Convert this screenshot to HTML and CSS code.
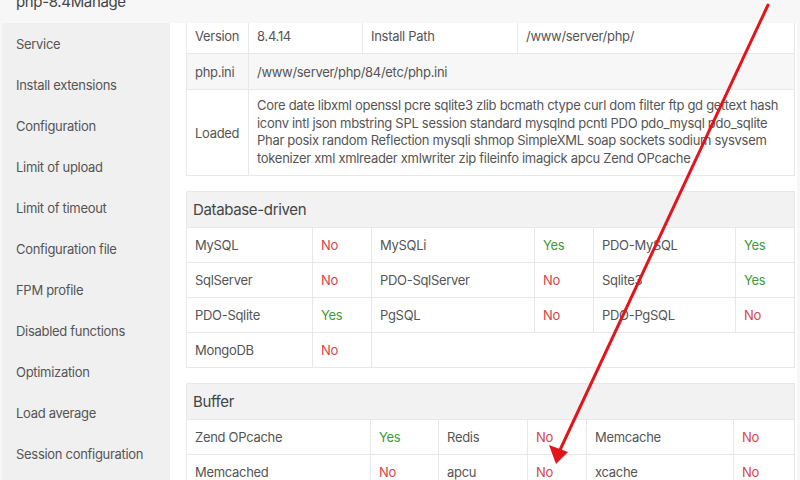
FILE: index.html
```html
<!DOCTYPE html>
<html>
<head>
<meta charset="utf-8">
<link rel="stylesheet" href="styles.css">
</head>
<body>
<div class="app">
  <header class="titlebar"><div class="title">php-8.4Manage</div></header>
  <div class="main">
    <nav class="sidebar">
      <div class="nav-item">Service</div>
      <div class="nav-item">Install extensions</div>
      <div class="nav-item">Configuration</div>
      <div class="nav-item">Limit of upload</div>
      <div class="nav-item">Limit of timeout</div>
      <div class="nav-item">Configuration file</div>
      <div class="nav-item">FPM profile</div>
      <div class="nav-item">Disabled functions</div>
      <div class="nav-item">Optimization</div>
      <div class="nav-item">Load average</div>
      <div class="nav-item">Session configuration</div>
    </nav>
    <section class="content">
      <table class="grid info">
        <colgroup><col class="c62"><col class="c114"><col class="c155"><col class="c277"></colgroup>
        <tr class="r-top">
          <td>Version</td><td>8.4.14</td><td>Install Path</td><td>/www/server/php/</td>
        </tr>
        <tr class="r-gray">
          <td>php.ini</td><td colspan="3">/www/server/php/84/etc/php.ini</td>
        </tr>
        <tr class="r-loaded">
          <td>Loaded</td>
          <td colspan="3" class="loaded">Core date libxml openssl pcre sqlite3 zlib bcmath ctype curl dom filter ftp gd gettext hash iconv intl json mbstring SPL session standard mysqlnd pcntl PDO pdo_mysql pdo_sqlite Phar posix random Reflection mysqli shmop SimpleXML soap sockets sodium sysvsem tokenizer xml xmlreader xmlwriter zip fileinfo imagick apcu Zend OPcache</td>
        </tr>
      </table>

      <table class="grid db">
        <colgroup><col class="c126"><col class="c59"><col class="c163"><col class="c59"><col class="c142"><col class="c59"></colgroup>
        <tr class="head"><td colspan="6">Database-driven</td></tr>
        <tr><td>MySQL</td><td class="no">No</td><td>MySQLi</td><td class="yes">Yes</td><td>PDO-MySQL</td><td class="yes">Yes</td></tr>
        <tr><td>SqlServer</td><td class="no">No</td><td>PDO-SqlServer</td><td class="no">No</td><td>Sqlite3</td><td class="yes">Yes</td></tr>
        <tr><td>PDO-Sqlite</td><td class="yes">Yes</td><td>PgSQL</td><td class="no">No</td><td>PDO-PgSQL</td><td class="no">No</td></tr>
        <tr><td>MongoDB</td><td class="no">No</td><td colspan="4"></td></tr>
      </table>

      <table class="grid buffer">
        <colgroup><col class="c184"><col class="c68"><col class="c89"><col class="c59"><col class="c147"><col class="c61"></colgroup>
        <tr class="head"><td colspan="6">Buffer</td></tr>
        <tr><td>Zend OPcache</td><td class="yes">Yes</td><td>Redis</td><td class="no">No</td><td>Memcache</td><td class="no">No</td></tr>
        <tr><td>Memcached</td><td class="no">No</td><td>apcu</td><td class="no">No</td><td>xcache</td><td class="no">No</td></tr>
      </table>
    </section>
  </div>
</div>
<svg class="annot" width="800" height="480" viewBox="0 0 800 480">
  <line x1="768" y1="5" x2="560" y2="450" stroke="#e3141b" stroke-width="3" stroke-linecap="round"/>
  <polygon points="556,464 549,445 568,452" fill="#e3141b"/>
</svg>
</body>
</html>
```

FILE: styles.css
```css
* { box-sizing: border-box; }
html, body { margin: 0; padding: 0; }
body {
  width: 800px;
  height: 480px;
  overflow: hidden;
  background: #f7f7f7;
  font-family: Inter, "Noto Sans", sans-serif;
  font-size: 13px;
  letter-spacing: -0.3px;
  color: #555;
  position: relative;
}
.app { display: flex; flex-direction: column; height: 480px; }
.titlebar { height: 23px; overflow: hidden; flex: none; }
.title {
  margin-top: -8px;
  padding-left: 16px;
  line-height: 20px;
  font-size: 15px;
  letter-spacing: -0.35px;
  color: #444;
}
.main {
  flex: 1;
  display: flex;
  padding: 0 3px 0 2px;
  min-height: 0;
}
.sidebar {
  width: 168px;
  flex: none;
  background: #f0f0f0;
  padding-top: 1px;
}
.nav-item {
  height: 41px;
  line-height: 41px;
  padding-left: 14px;
  color: #555;
  white-space: nowrap;
}
.content {
  flex: 1;
  background: #fff;
  padding: 0 3px 0 16px;
  overflow: hidden;
}
.grid {
  border-collapse: collapse;
  table-layout: fixed;
  width: 608px;
  margin-bottom: 15px;
}
.grid td {
  border: 1px solid #e8e8e8;
  height: 35px;
  padding: 0 8px;
  white-space: nowrap;
  overflow: hidden;
}
.info { margin-top: -5px; }
.r-top td { height: 35px; }
.r-gray td { background: #f7f7f7; height: 36px; }
.r-loaded td { height: 86px; }
.grid td.loaded {
  white-space: normal;
  line-height: 17.5px;
  padding: 6px 8px 7px;
}
.head td {
  background: #f2f2f2;
  height: 36px;
  font-size: 15px;
  letter-spacing: -0.35px;
  color: #444;
  padding-left: 6px;
}
.yes { color: #3f9a3f; }
.no { color: #d9434a; }
.c62 { width: 62px; } .c114 { width: 114px; } .c155 { width: 155px; } .c277 { width: 277px; }
.c126 { width: 126px; } .c59 { width: 59px; } .c163 { width: 163px; } .c142 { width: 142px; }
.c184 { width: 184px; } .c68 { width: 68px; } .c89 { width: 89px; } .c147 { width: 147px; } .c61 { width: 61px; }
.annot { position: absolute; left: 0; top: 0; pointer-events: none; }
```
